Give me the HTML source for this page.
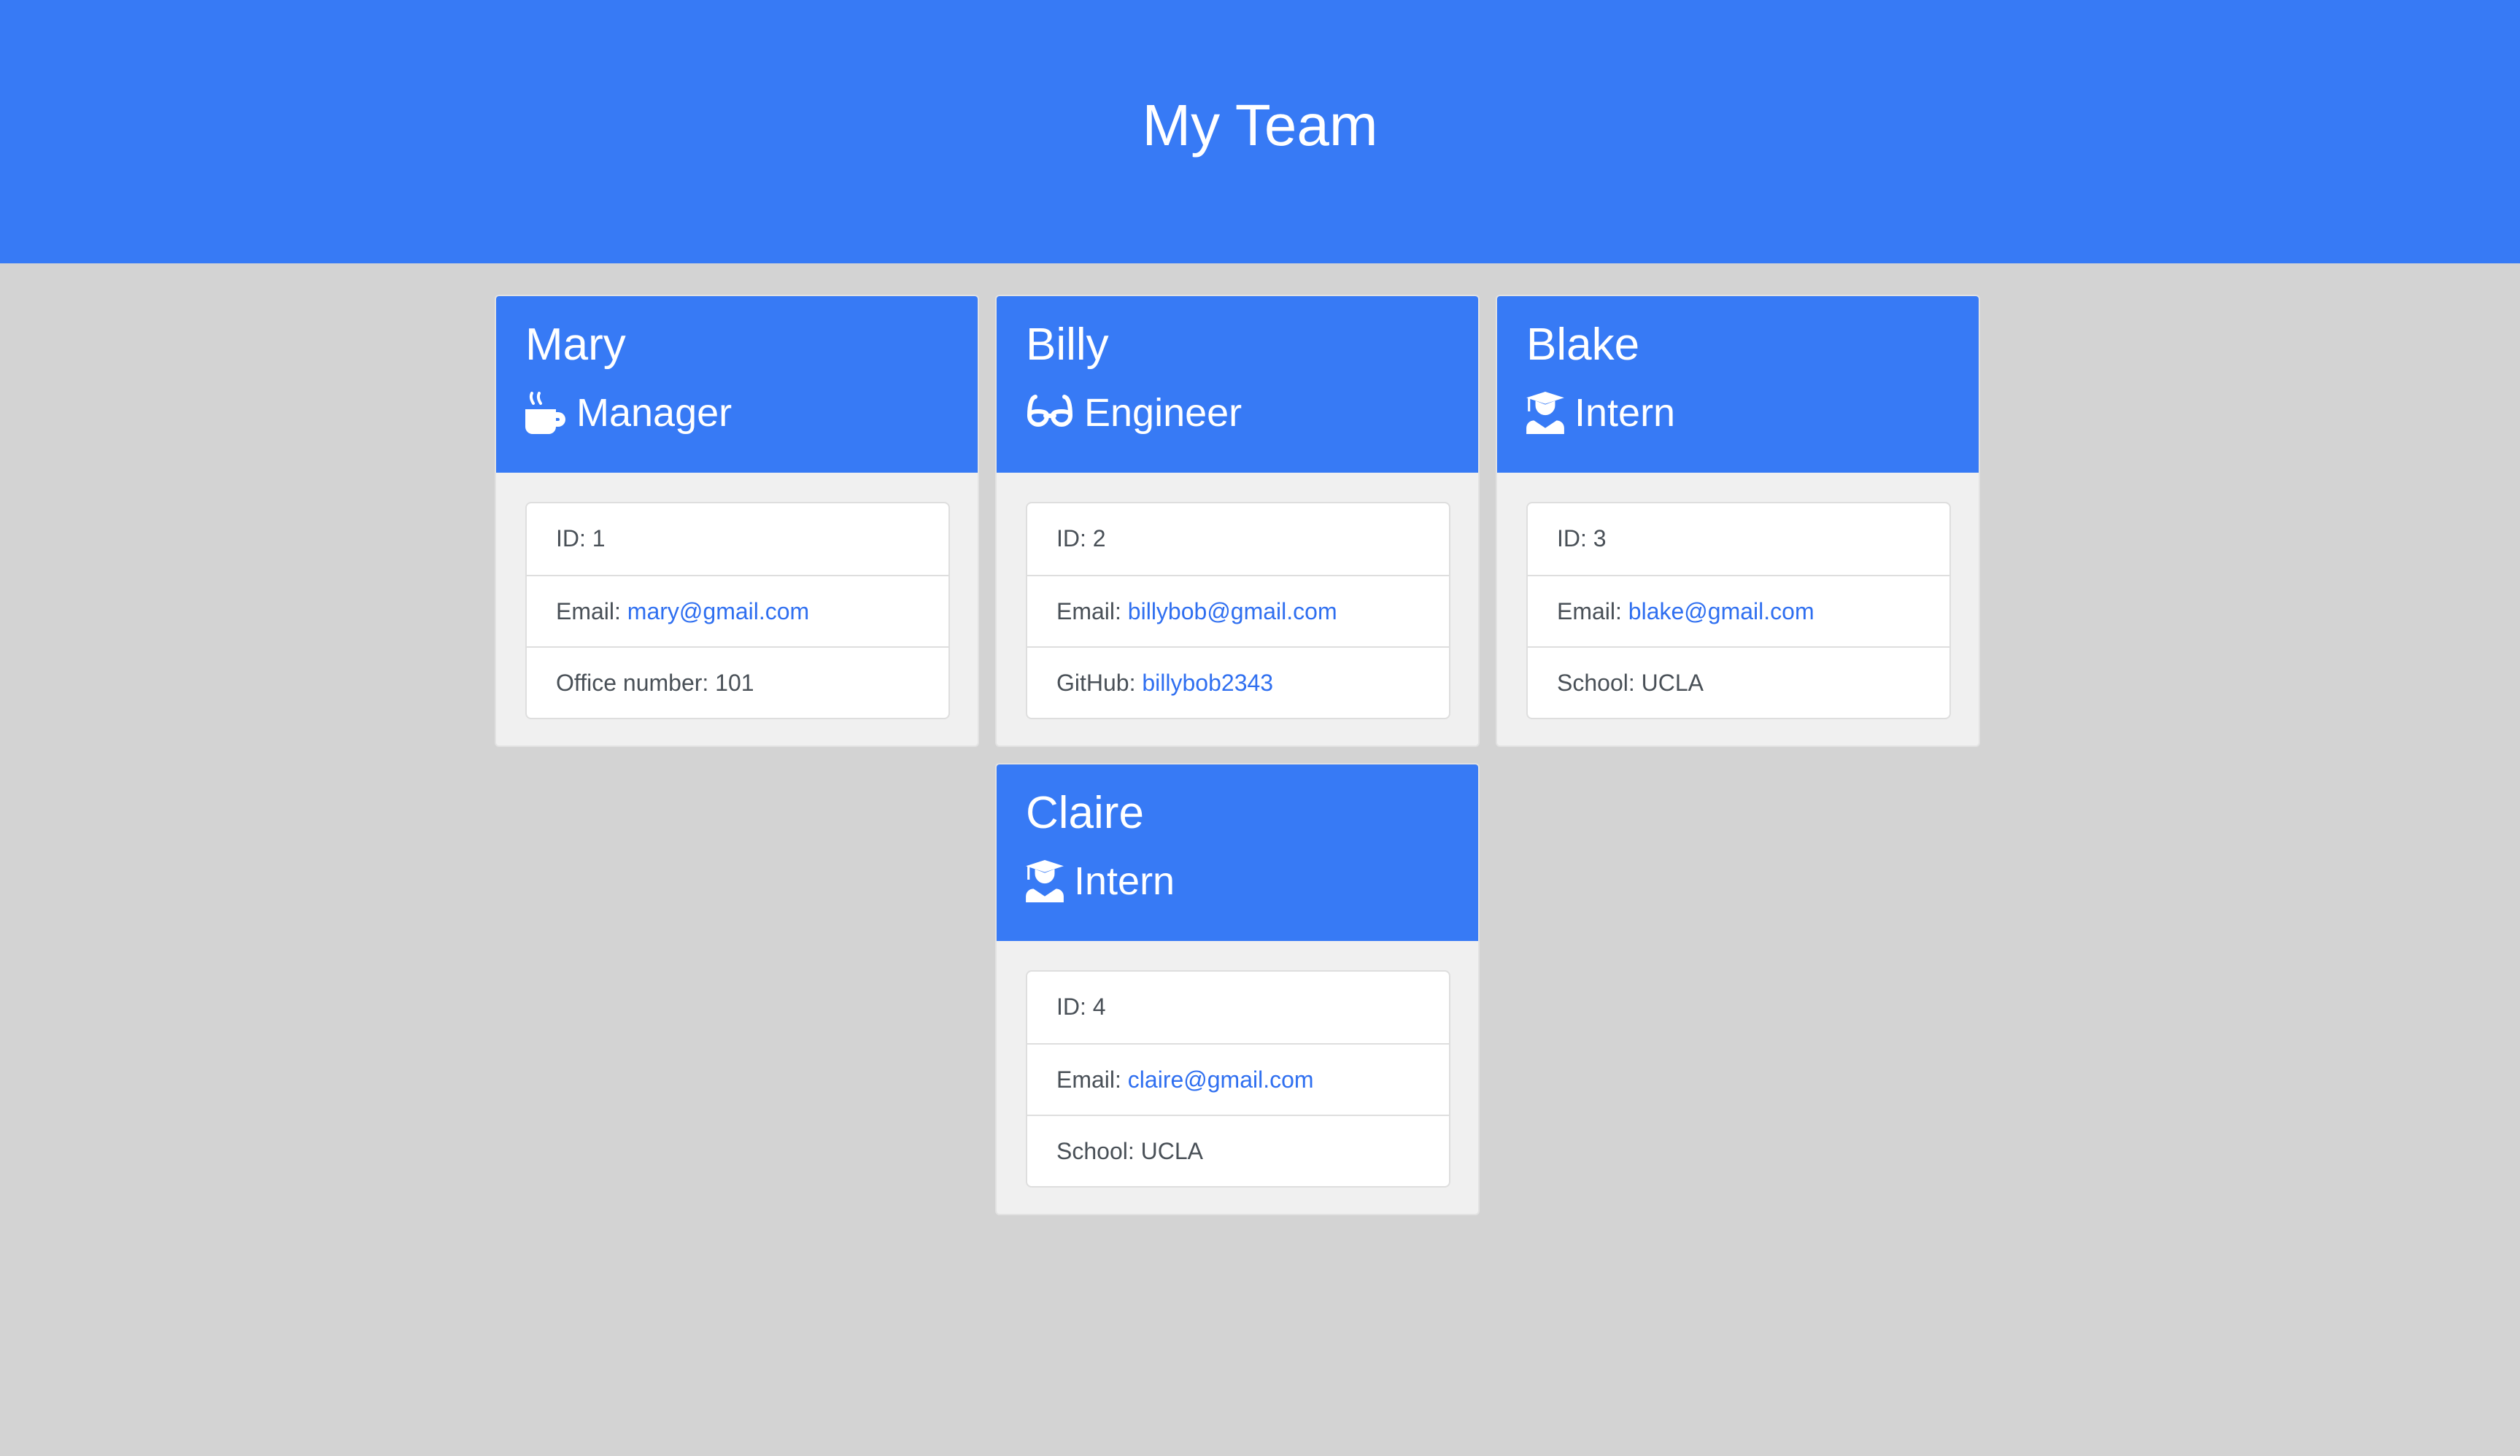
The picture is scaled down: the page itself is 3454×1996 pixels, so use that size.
<!DOCTYPE html>
<html><head><meta charset="utf-8"><style>
*{box-sizing:border-box;margin:0;padding:0}
body{width:3454px;height:1996px;background:#d3d3d3;font-family:"Liberation Sans",sans-serif;position:relative;overflow:hidden}
.hdr{position:absolute;left:0;top:0;width:3454px;height:361px;background:#377af5;color:#fff;text-align:center}
.hdr h1{font-size:80px;font-weight:normal;line-height:1;position:absolute;top:132px;width:100%}
.card{position:absolute;width:664px;height:620px;background:#f0f0f0;border:2px solid #e2e2e2;border-radius:6px;overflow:hidden}
.ch{height:242px;background:#377af5;color:#fff;padding-left:40px;position:relative}
.nm{position:absolute;left:40px;top:30px;font-size:62px;line-height:1.2}
.rl{position:absolute;left:40px;top:128px;font-size:54px;line-height:1.2;display:flex;align-items:center}
.rl svg{margin-right:14px}
.lg{position:absolute;left:40px;top:282px;width:582px;background:#fff;border:2px solid #dedede;border-radius:8px}
.li{height:98px;border-top:2px solid #dedede;font-size:32px;color:#495057;padding-left:40px;line-height:96px}
.li:first-child{border-top:none}
a{color:#2f6ff0;text-decoration:none}
</style></head><body>
<div class="hdr"><h1>My Team</h1></div>

<div class="card" style="left:678px;top:404px">
<div class="ch"><div class="nm">Mary</div><div class="rl"><svg width="56" height="58" viewBox="0 0 56 58"><path d="M0 24h42v24a10 10 0 0 1-10 10H10A10 10 0 0 1 0 48z" fill="#fff"/><path d="M42 28h3a10 10 0 0 1 0 20h-3v-8h3a2 2 0 0 0 0-4h-3z" fill="#fff"/><path d="M9 2q-3 6 2 14M19 2q-3 6 2 14" stroke="#fff" stroke-width="4" fill="none" stroke-linecap="round"/></svg>Manager</div></div>
<div class="lg"><div class="li">ID: 1</div><div class="li">Email: <a>mary@gmail.com</a></div><div class="li">Office number: 101</div></div>
</div>

<div class="card" style="left:1364px;top:404px">
<div class="ch"><div class="nm">Billy</div><div class="rl"><svg width="66" height="52" viewBox="0 0 64 52"><g stroke="#fff" stroke-width="6" fill="none" stroke-linecap="round"><path d="M12 4Q4 6 4 30"/><path d="M52 4Q60 6 60 30"/><path d="M4 30a12 12 0 0 0 24 0q0-6-12-6T4 30z"/><path d="M36 30a12 12 0 0 0 24 0q0-6-12-6t-12 6z"/><path d="M26 30h12"/></g></svg>Engineer</div></div>
<div class="lg"><div class="li">ID: 2</div><div class="li">Email: <a>billybob@gmail.com</a></div><div class="li">GitHub: <a>billybob2343</a></div></div>
</div>

<div class="card" style="left:2050px;top:404px">
<div class="ch"><div class="nm">Blake</div><div class="rl"><svg width="52" height="58" viewBox="0 0 50 56"><path d="M25 0L50 8L25 16L0 8z" fill="#fff"/><path d="M12 12v6a13 13 0 0 0 26 0v-6l-13 5z" fill="#fff"/><rect x="2" y="8" width="3" height="18" fill="#fff"/><path d="M0 56v-8a10 10 0 0 1 10-10l15 10l15-10a10 10 0 0 1 10 10v8z" fill="#fff"/></svg>Intern</div></div>
<div class="lg"><div class="li">ID: 3</div><div class="li">Email: <a>blake@gmail.com</a></div><div class="li">School: UCLA</div></div>
</div>

<div class="card" style="left:1364px;top:1046px">
<div class="ch"><div class="nm">Claire</div><div class="rl"><svg width="52" height="58" viewBox="0 0 50 56"><path d="M25 0L50 8L25 16L0 8z" fill="#fff"/><path d="M12 12v6a13 13 0 0 0 26 0v-6l-13 5z" fill="#fff"/><rect x="2" y="8" width="3" height="18" fill="#fff"/><path d="M0 56v-8a10 10 0 0 1 10-10l15 10l15-10a10 10 0 0 1 10 10v8z" fill="#fff"/></svg>Intern</div></div>
<div class="lg"><div class="li">ID: 4</div><div class="li">Email: <a>claire@gmail.com</a></div><div class="li">School: UCLA</div></div>
</div>
</body></html>
